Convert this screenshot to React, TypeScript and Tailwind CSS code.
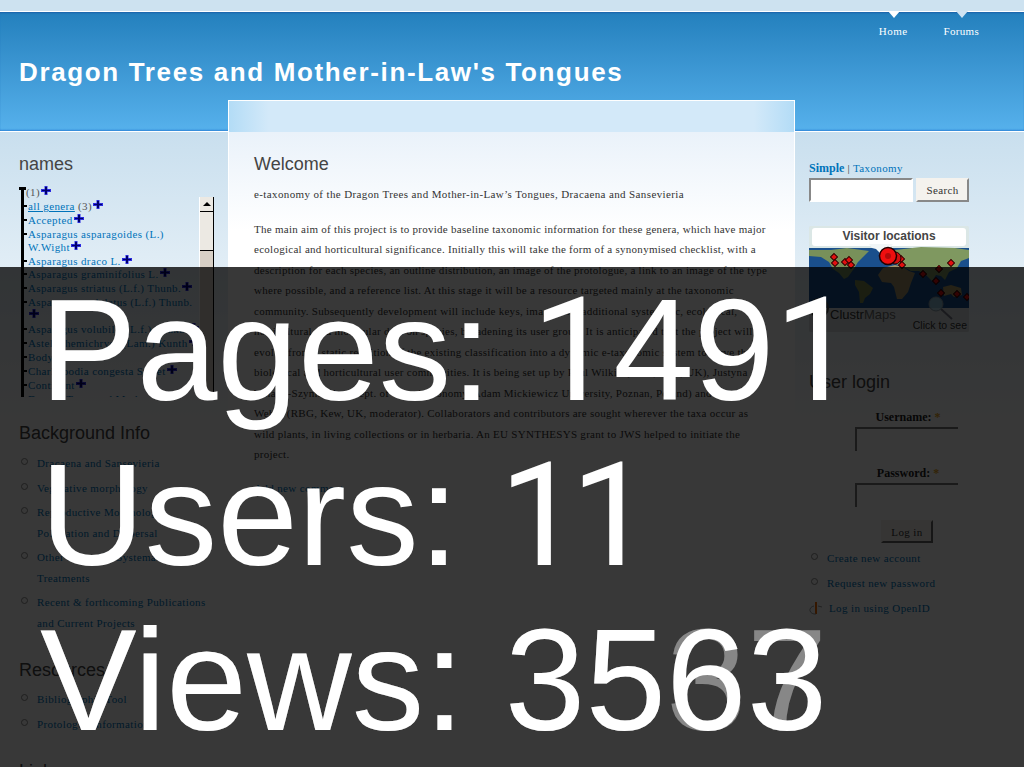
const serif = "font-['Liberation_Serif',serif]";
const sans = "font-['Liberation_Sans',sans-serif]";

const treeItems = [
  "Accepted",
  "Asparagus asparagoides (L.) W.Wight",
  "Asparagus draco L.",
  "Asparagus graminifolius L.",
  "Asparagus striatus (L.f.) Thunb.",
  "Asparagus undulatus (L.f.) Thunb.",
  "Asparagus volubilis (L.f.) Thunb.",
  "Astelia hemichrysa (Lam.) Kunth",
  "Body Parts",
  "Charlwoodia congesta Sweet",
  "Continent",
  "Dragon Trees and Mother",
];

const bodyLines = [
  "The main aim of this project is to provide baseline taxonomic information for these genera, which have major",
  "ecological and horticultural significance. Initially this will take the form of a synonymised checklist, with a",
  "description for each species, an outline distribution, an image of the protologue, a link to an image of the type",
  "where possible, and a reference list. At this stage it will be a resource targeted mainly at the taxonomic",
  "community. Subsequently development will include keys, images and additional systematic, ecological,",
  "horticultural and molecular data on species, broadening its user group. It is anticipated that the project will",
  "evolve from a static rendition of the existing classification into a dynamic e-taxonomic system to serve the",
  "biological and horticultural user communities. It is being set up by Paul Wilkin (RBG, Kew, UK), Justyna",
  "Wiland-Szymanska (Dept. of Plant Taxonomy, Adam Mickiewicz University, Poznan, Poland) and Oda",
  "Weber (RBG, Kew, UK, moderator). Collaborators and contributors are sought wherever the taxa occur as",
  "wild plants, in living collections or in herbaria. An EU SYNTHESYS grant to JWS helped to initiate the",
  "project.",
];

function Plus() {
  return (
    <svg width="10" height="9" viewBox="0 0 10 9" className="-my-[6px] ml-px inline-block align-[7px]">
      <path d="M3.5 0h3v3H10v3H6.5v3h-3V6H0V3h3.5z" fill="#2a2ae0" />
      <path d="M4 1h2v3h3v1H6v3H4V5H1V4h3z" fill="#00006a" />
    </svg>
  );
}

function TreeRow({ children }: { children: React.ReactNode }) {
  return (
    <div className="relative mt-[0.9px] pl-[4px]">
      <span className="absolute left-0 top-[5px] h-[2px] w-[3px] bg-black" />
      {children}
    </div>
  );
}

function Bullet({ children }: { children: React.ReactNode }) {
  return (
    <li className="flex gap-[9px] pl-[2px]">
      <span className="mt-[5px] size-[7px] shrink-0 rounded-full border border-[#8a8a8a]" />
      <a className="text-[#0073ba]">{children}</a>
    </li>
  );
}

function BlockTitle({ children }: { children: React.ReactNode }) {
  return <h2 className={`${sans} text-[18px] leading-[22px] tracking-normal text-[#444]`}>{children}</h2>;
}

// Liberation's 1 has a foot, the reference's has none
function One() {
  return <span className="font-['Roboto',sans-serif] leading-[0]">1</span>;
}

function VisitorMap() {
  const dots = [
    [25, 31], [26, 37], [36, 36], [40, 34], [42, 39], [92, 33], [93, 39], [142, 37],
    [130, 43], [114, 48], [127, 55], [132, 67], [148, 68], [158, 71],
  ];
  return (
    <div className="relative h-[106px] w-[160px] overflow-hidden rounded-[2px] bg-[#d5e5ee]">
      <svg width="160" height="106" viewBox="0 0 160 106">
        <rect width="160" height="106" fill="#dbe7e6" />
        <rect x="3" y="2" width="154" height="18" rx="3" fill="#ffffff" />
        <rect y="22" width="160" height="60" fill="#1a4f8c" />
        <path d="M0 24h22l16-2 22 3-6 6-5 5-5 8-5 7-4 2-5-6-6-4-4-7-8-5-12-1z" fill="#78905a" />
        <path d="M46 54l9 1 9 7-3 6-5 4-2 5h-3l-1-11-4-7z" fill="#7a8a4e" />
        <path d="M74 42l12-3 8 2 6 4 6 2-4 10-3 9-6 7h-5l-3-12-3-4-9-1-4-7z" fill="#a2946a" />
        <path d="M86 24l26-3 34 1 14 2v8l-8 3-4 7-8 4-4 8-4-4-5-1-4 6-6-6-7-4-8 0-7-4-6-2-6-3z" fill="#7f9860" />
        <path d="M134 61l8-2 10 3 1 7-8 2-3-3-7 2z" fill="#ab9a66" />
        <path d="M60 18h24l-6 7-6 3-5-5-4-1z" fill="#f2f6f7" />
        <rect y="82" width="160" height="24" fill="#d6dcde" />
        {dots.map(([x, y], i) => (
          <rect key={i} x={x - 2.5} y={y - 2.5} width="5" height="5" transform={`rotate(45 ${x} ${y})`} fill="#e01010" stroke="#300" />
        ))}
        <circle cx="86" cy="32" r="6" fill="#d40d0d" stroke="#200" />
        <circle cx="79" cy="30" r="8.5" fill="#f00f0f" stroke="#200" strokeWidth="1.5" />
        <circle cx="79" cy="30" r="3" fill="#b30b0b" />
        <path d="M132 83l11 10" stroke="#778" strokeWidth="2" />
        <circle cx="127" cy="78" r="7" fill="#a8d4e2" fillOpacity="0.8" stroke="#8a99a5" />
        <circle cx="10" cy="82" r="9" fill="none" stroke="#444" strokeWidth="2" />
      </svg>
      <p className={`${sans} absolute inset-x-0 top-[3px] text-center text-[12px] font-bold leading-[14px] tracking-normal text-[#444]`}>
        Visitor locations
      </p>
      <p className={`${sans} absolute bottom-[10px] left-[21px] text-[13px] leading-[14px] tracking-normal text-[#333]`}>
        Clustr<span className="text-[#666]">Maps</span>
      </p>
      <p className={`${sans} absolute bottom-[1px] right-[2px] text-[10.5px] leading-[12px] tracking-normal text-[#333]`}>Click to see</p>
    </div>
  );
}

function LoginField({ label }: { label: string }) {
  return (
    <div className="flex flex-col items-center">
      <label className="ml-[38px] text-[12px] font-bold leading-[16px] tracking-normal text-[#222]">
        {label}: <span className="text-[#e8a317]">*</span>
      </label>
      <div className="ml-[35px] mt-[2px] h-[24px] w-[103px] border-l-2 border-t-2 border-[#777] bg-white" />
    </div>
  );
}

export default function App() {
  return (
    <div className={`${serif} relative h-[767px] w-[1024px] overflow-hidden bg-white text-[11px] leading-[20px] tracking-[0.38px] text-[#333]`}>
      <div className="h-[11px] bg-[#cde2f0]" />
      <header className="flex h-[121px] flex-col border-y border-white bg-gradient-to-b from-[#2380bd] to-[#56b1ec] shadow-[inset_0_2px_2px_-1px_#1b5fa8,inset_0_-2px_2px_-1px_#2d83d6]">
        <nav className="flex h-[28px] justify-end gap-[36px] pr-[45px] text-white">
          <a className="relative pt-[9px] text-[11px] leading-[20px] tracking-[0.5px]">
            <span className="absolute -top-px left-[9px] h-0 w-0 border-x-[6px] border-t-[7px] border-x-transparent border-t-white" />
            Home
          </a>
          <a className="relative pt-[9px] text-[11px] leading-[20px] tracking-[0.3px]">
            <span className="absolute -top-px left-[12px] h-0 w-0 border-x-[6px] border-t-[7px] border-x-transparent border-t-[#cfe3f2]" />
            Forums
          </a>
        </nav>
        <h1 className={`${sans} ml-[19px] mt-[17px] text-[26px] font-bold leading-[30px] tracking-[1.64px] text-white`}>
          Dragon Trees and Mother-in-Law's Tongues
        </h1>
      </header>

      <div className="flex h-[635px] bg-gradient-to-b from-[#c9dfee] to-white to-[300px]">
        <aside className="w-[228px] shrink-0 pl-[19px] pt-[21px]">
          <BlockTitle>names</BlockTitle>
          <div className="mt-[10px] flex h-[212px] w-[195px]">
            <div className="relative ml-[2px] mt-[2px] w-[3px] shrink-0 bg-black">
              <span className="absolute -left-[2px] top-0 h-[3px] w-[7px] bg-black" />
            </div>
            <div className="-mr-[2px] min-w-0 flex-1 overflow-hidden leading-[13px] text-[#0073ba]">
              <p className="pl-[2px] pt-[1px] text-[#555]">
                (1)
                <Plus />
              </p>
              <TreeRow>
                <a className="underline">all genera</a> <span className="text-[#555]">(3)</span>
                <Plus />
              </TreeRow>
              {treeItems.map((item) => (
                <TreeRow key={item}>
                  {item}
                  <Plus />
                </TreeRow>
              ))}
            </div>
            <div className="relative mt-[12px] flex h-[200px] w-[15px] shrink-0 flex-col border-l border-r border-l-white border-r-black bg-[#d8d0c6]">
              <div className="flex h-[15px] items-center justify-center border-b border-black bg-[#ece9e3]">
                <span className="h-0 w-0 border-x-[4px] border-b-[4px] border-x-transparent border-b-black" />
              </div>
              <div className="h-[39px] border-b border-black bg-[#ece9e3]" />
            </div>
          </div>

          <div className="mt-[25px]">
            <BlockTitle>Background Info</BlockTitle>
            <ul className="mt-[9px] flex w-[190px] flex-col gap-[4px] leading-[20.5px]">
              <Bullet>Dracaena and Sansevieria</Bullet>
              <Bullet>Vegetative morphology</Bullet>
              <Bullet>Reproductive Morphology, Pollination and Dispersal</Bullet>
              <Bullet>Other Scientific Systematic Treatments</Bullet>
              <Bullet>Recent &amp; forthcoming Publications and Current Projects</Bullet>
            </ul>
          </div>

          <div className="mt-[26px]">
            <BlockTitle>Resources</BlockTitle>
            <ul className="mt-[8px] flex w-[190px] flex-col gap-[4px] leading-[20.5px]">
              <Bullet>Bibliographic Tool</Bullet>
              <Bullet>Protologue Information</Bullet>
            </ul>
          </div>

          <div className="mt-[26px]">
            <BlockTitle>Links</BlockTitle>
          </div>
        </aside>

        <main className="relative -mt-[32px] h-[511px] w-[567px] shrink-0 border border-white bg-gradient-to-b from-[#eaf2fa] from-[32px] to-white to-[130px]">
          <div className="h-[31px] bg-[linear-gradient(90deg,#b3dcf6,#d3e9f9_40px,#d3e9f9_525px,#b3dcf6)]" />
          <div className="px-[25px] pt-[21px]">
            <BlockTitle>Welcome</BlockTitle>
            <p className="mt-[9px]">e-taxonomy of the Dragon Trees and Mother-in-Law’s Tongues, Dracaena and Sansevieria</p>
            <div className="mt-[15px] whitespace-nowrap leading-[20.45px] tracking-[0.27px]">
              {bodyLines.map((line) => (
                <p key={line}>{line}</p>
              ))}
            </div>
            <a className="mt-[14px] block text-[#0073ba]">Add new comment</a>
          </div>
        </main>

        <aside className="flex-1 pl-[14px] pt-[26px]">
          <p className="leading-[20px] text-[#0073ba]">
            <b className="text-[12px] tracking-normal">Simple</b> <span className="text-[#333]">|</span> Taxonomy
          </p>
          <div className="flex gap-[3px]">
            <div className="h-[24px] w-[104px] border-2 border-[#888] border-b-white border-r-white bg-white" />
            <div className="flex h-[24px] w-[53px] items-center justify-center border-2 border-[#f4f2ee] border-b-[#888] border-r-[#888] bg-[#f4f2ee] text-[#333]">
              Search
            </div>
          </div>
          <div className="mt-[24px]">
            <VisitorMap />
          </div>
          <div className="mt-[39px]">
            <BlockTitle>User login</BlockTitle>
          </div>
          <form className="mt-[16px] flex w-[160px] flex-col gap-[14px]">
            <LoginField label="Username" />
            <LoginField label="Password" />
          </form>
          <div className="ml-[72px] mt-[13px] flex h-[23px] w-[52px] items-center justify-center border-2 border-[#f4f2ee] border-b-[#666] border-r-[#666] bg-[#f4f2ee] text-[#333]">
            Log in
          </div>
          <ul className="mt-[5px] flex flex-col gap-[5px] text-[#0073ba]">
            <Bullet>Create new account</Bullet>
            <Bullet>Request new password</Bullet>
            <li className="flex items-center gap-[6px]">
              <svg width="14" height="14" viewBox="0 0 14 14">
                <path d="M7 1v12" stroke="#f26a00" strokeWidth="2" />
                <path d="M5 5a5 4 0 1 0 2 8M9 5l4 1" fill="none" stroke="#999" />
              </svg>
              <a>Log in using OpenID</a>
            </li>
          </ul>
        </aside>
      </div>

      <div className={`${sans} absolute inset-x-0 bottom-0 top-[267px] z-20 bg-black/[0.78] pl-[40px] text-[145px] leading-[165px] tracking-normal text-white`}>
        <p className="mt-[1px]">
          Pages: <One />49<One />
        </p>
        <p>
          Users: <One /><span className="ml-[-10px]"><One /></span>
        </p>
        <div className="relative">
          <p className="absolute left-0 top-0 text-white/40">Views: 3537</p>
          <p className="relative">Views: 3563</p>
        </div>
      </div>
    </div>
  );
}
